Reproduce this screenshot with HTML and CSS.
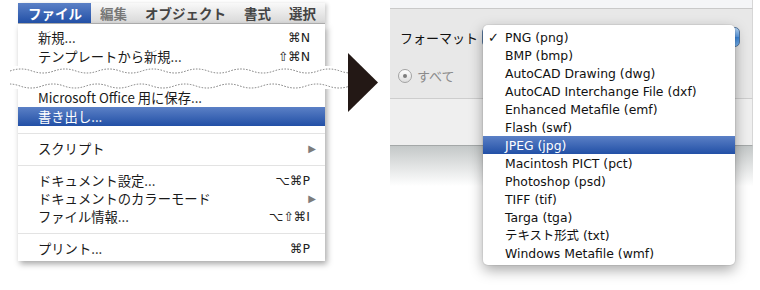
FILE: index.html
```html
<!DOCTYPE html>
<html lang="ja">
<head>
    <meta charset="UTF-8">
    <title>書き出し</title>
    <link rel="stylesheet" href="styles.css">
</head>
<body>
    <div class="page">
        <div class="menu">
            <div class="menubar">
                <span class="mb-item active">ファイル</span>
                <span class="mb-item dim">編集</span>
                <span class="mb-item">オブジェクト</span>
                <span class="mb-item">書式</span>
                <span class="mb-item">選択</span>
            </div>
            <div class="panel">
                <div class="item tall"><span>新規...</span><span class="key">⌘N</span></div>
                <div class="item tall"><span>テンプレートから新規...</span><span class="key">⇧⌘N</span></div>
                <div class="tear">
                    <svg width="338" height="23" viewBox="0 0 338 23">
                        <path d="M0 5 Q11 1 22 5 T44 5 T66 5 T88 5 T110 5 T132 5 T154 5 T176 5 T198 5 T220 5 T242 5 T264 5 T286 5 T308 5 T330 5 T352 5" />
                        <path d="M-12 20 Q-1 16 10 20 T32 20 T54 20 T76 20 T98 20 T120 20 T142 20 T164 20 T186 20 T208 20 T230 20 T252 20 T274 20 T296 20 T318 20 T340 20" />
                    </svg>
                </div>
                <div class="item"><span>Microsoft Office 用に保存...</span></div>
                <div class="item tall sel"><span>書き出し...</span></div>
                <div class="sep"></div>
                <div class="item"><span>スクリプト</span><span class="sub">▶</span></div>
                <div class="sep"></div>
                <div class="item"><span>ドキュメント設定...</span><span class="key">⌥⌘P</span></div>
                <div class="item"><span>ドキュメントのカラーモード</span><span class="sub">▶</span></div>
                <div class="item"><span>ファイル情報...</span><span class="key">⌥⇧⌘I</span></div>
                <div class="sep"></div>
                <div class="item"><span>プリント...</span><span class="key">⌘P</span></div>
            </div>
        </div>

        <div class="arrow">
            <svg width="30" height="59" viewBox="0 0 30 59"><polygon points="0,0 30,29.5 0,59" /></svg>
        </div>

        <div class="dialog">
            <div class="dlg-top"></div>
            <div class="dlg-main">
                <div class="fmt-row">
                    <span class="label">フォーマット</span>
                    <div class="popup"></div>
                </div>
                <div class="radio-row">
                    <span class="radio"></span>
                    <span class="radio-label">すべて</span>
                    <span class="radio second"></span>
                </div>
            </div>
            <div class="dlg-lower"></div>
            <div class="dlg-fade"></div>

            <div class="dropdown">
                <div class="opt"><span class="check">✓</span>PNG (png)</div>
                <div class="opt"><span class="check"></span>BMP (bmp)</div>
                <div class="opt"><span class="check"></span>AutoCAD Drawing (dwg)</div>
                <div class="opt"><span class="check"></span>AutoCAD Interchange File (dxf)</div>
                <div class="opt"><span class="check"></span>Enhanced Metafile (emf)</div>
                <div class="opt"><span class="check"></span>Flash (swf)</div>
                <div class="opt sel"><span class="check"></span>JPEG (jpg)</div>
                <div class="opt"><span class="check"></span>Macintosh PICT (pct)</div>
                <div class="opt"><span class="check"></span>Photoshop (psd)</div>
                <div class="opt"><span class="check"></span>TIFF (tif)</div>
                <div class="opt"><span class="check"></span>Targa (tga)</div>
                <div class="opt"><span class="check"></span>テキスト形式 (txt)</div>
                <div class="opt"><span class="check"></span>Windows Metafile (wmf)</div>
            </div>
        </div>
    </div>
</body>
</html>
```

FILE: styles.css
```css
* { margin: 0; padding: 0; box-sizing: border-box; }
body { width: 760px; height: 290px; overflow: hidden; background: #fff; font-family: "Noto Sans CJK JP", sans-serif; color: #1a1a1a; }
.page { display: flex; align-items: flex-start; }

/* left: file menu */
.menu { width: 307px; margin: 3px 0 0 18px; }
.menubar { display: flex; height: 21px; background: linear-gradient(#f9f9f9, #d8d8d8); border-bottom: 1px solid #b3b3b3; box-shadow: 2px 1px 4px rgba(0,0,0,0.2); overflow: hidden; }
.mb-item { padding: 0 9px; font-size: 13.5px; font-weight: bold; line-height: 20px; color: #444; white-space: nowrap; }
.mb-item.active { padding: 0 9px 0 10px; background: linear-gradient(#5b80c6, #2250a6); color: #fff; }
.mb-item.dim { color: #777; }
.panel { background: #fff; box-shadow: 2px 3px 6px rgba(0,0,0,0.35); padding: 4px 0 3px; }
.item { display: flex; align-items: center; height: 18px; padding: 0 15px 0 20px; font-size: 13.3px; line-height: 18px; white-space: nowrap; }
.item.tall { height: 19px; }
.item.sel { background: linear-gradient(#5b80c6, #2250a6); color: #fff; }
.key { margin-left: auto; font-family: "DejaVu Sans", sans-serif; font-size: 12.5px; color: #222; }
.sub { margin-left: auto; margin-right: -6px; font-family: "DejaVu Sans", sans-serif; font-size: 10px; color: #7c7c7c; }
.sep { display: flex; align-items: center; height: 14px; }
.sep::before { content: ""; flex: 1; border-top: 1px solid #e3e3e3; }
.tear { height: 23px; margin: 0 -23px 0 -8px; background: #fff; }
.tear svg { display: block; }
.tear path { fill: none; stroke: #7a7a7a; stroke-width: 1; stroke-dasharray: 1.5 1.5; }

/* arrow */
.arrow { margin: 53px 0 0 23px; }
.arrow svg { display: block; fill: #231815; }

/* right: export dialog */
.dialog { position: relative; width: 363px; margin-left: 12px; }
.dlg-top { height: 9px; background: #f4f5f7; border-bottom: 1px solid #c9c9c9; border-right: 1px solid #d6d6d6; }
.dlg-main { height: 90px; background: #e8e8e8; border-bottom: 1px solid #cdcdcd; border-right: 1px solid #d6d6d6; }
.dlg-lower { height: 47px; background: #efefef; border-bottom: 1px solid #a4a8a8; border-right: 1px solid #d6d6d6; }
.dlg-fade { height: 40px; background: linear-gradient(#c4c8c8, #fff); }
.fmt-row { display: flex; align-items: center; padding: 18px 12px 0 10px; }
.label { font-size: 13px; color: #111; }
.popup { margin-left: auto; width: 258px; height: 20px; border-radius: 5px; border: 1px solid #56789f; background: linear-gradient(#b6d6f6, #5b9ce6 50%, #3b86dc 51%, #78b6f2); }
.radio-row { display: flex; align-items: center; gap: 5px; margin-top: 19px; padding-left: 8px; }
.radio { display: flex; align-items: center; justify-content: center; width: 14px; height: 14px; border-radius: 50%; border: 1px solid #a3a3a3; background: linear-gradient(#fff, #dedede); }
.radio::after { content: ""; width: 4px; height: 4px; border-radius: 50%; background: #7e7e7e; }
.radio.second { margin-left: 25px; }
.radio.second::after { display: none; }
.radio-label { font-size: 13px; color: #8c8c8c; }

.dropdown { position: absolute; left: 93px; top: 25px; width: 252px; padding: 3px 0; background: #fff; border-radius: 5px; box-shadow: 0 5px 14px rgba(0,0,0,0.35), 0 0 0 1px rgba(0,0,0,0.05); }
.opt { display: flex; align-items: center; height: 18px; font-family: "DejaVu Sans", "Noto Sans CJK JP", sans-serif; font-size: 12.4px; color: #111; white-space: nowrap; }
.opt.sel { background: linear-gradient(#5b80c6, #2250a6); color: #fff; }
.check { width: 22px; padding-left: 5px; font-size: 13px; }
```
